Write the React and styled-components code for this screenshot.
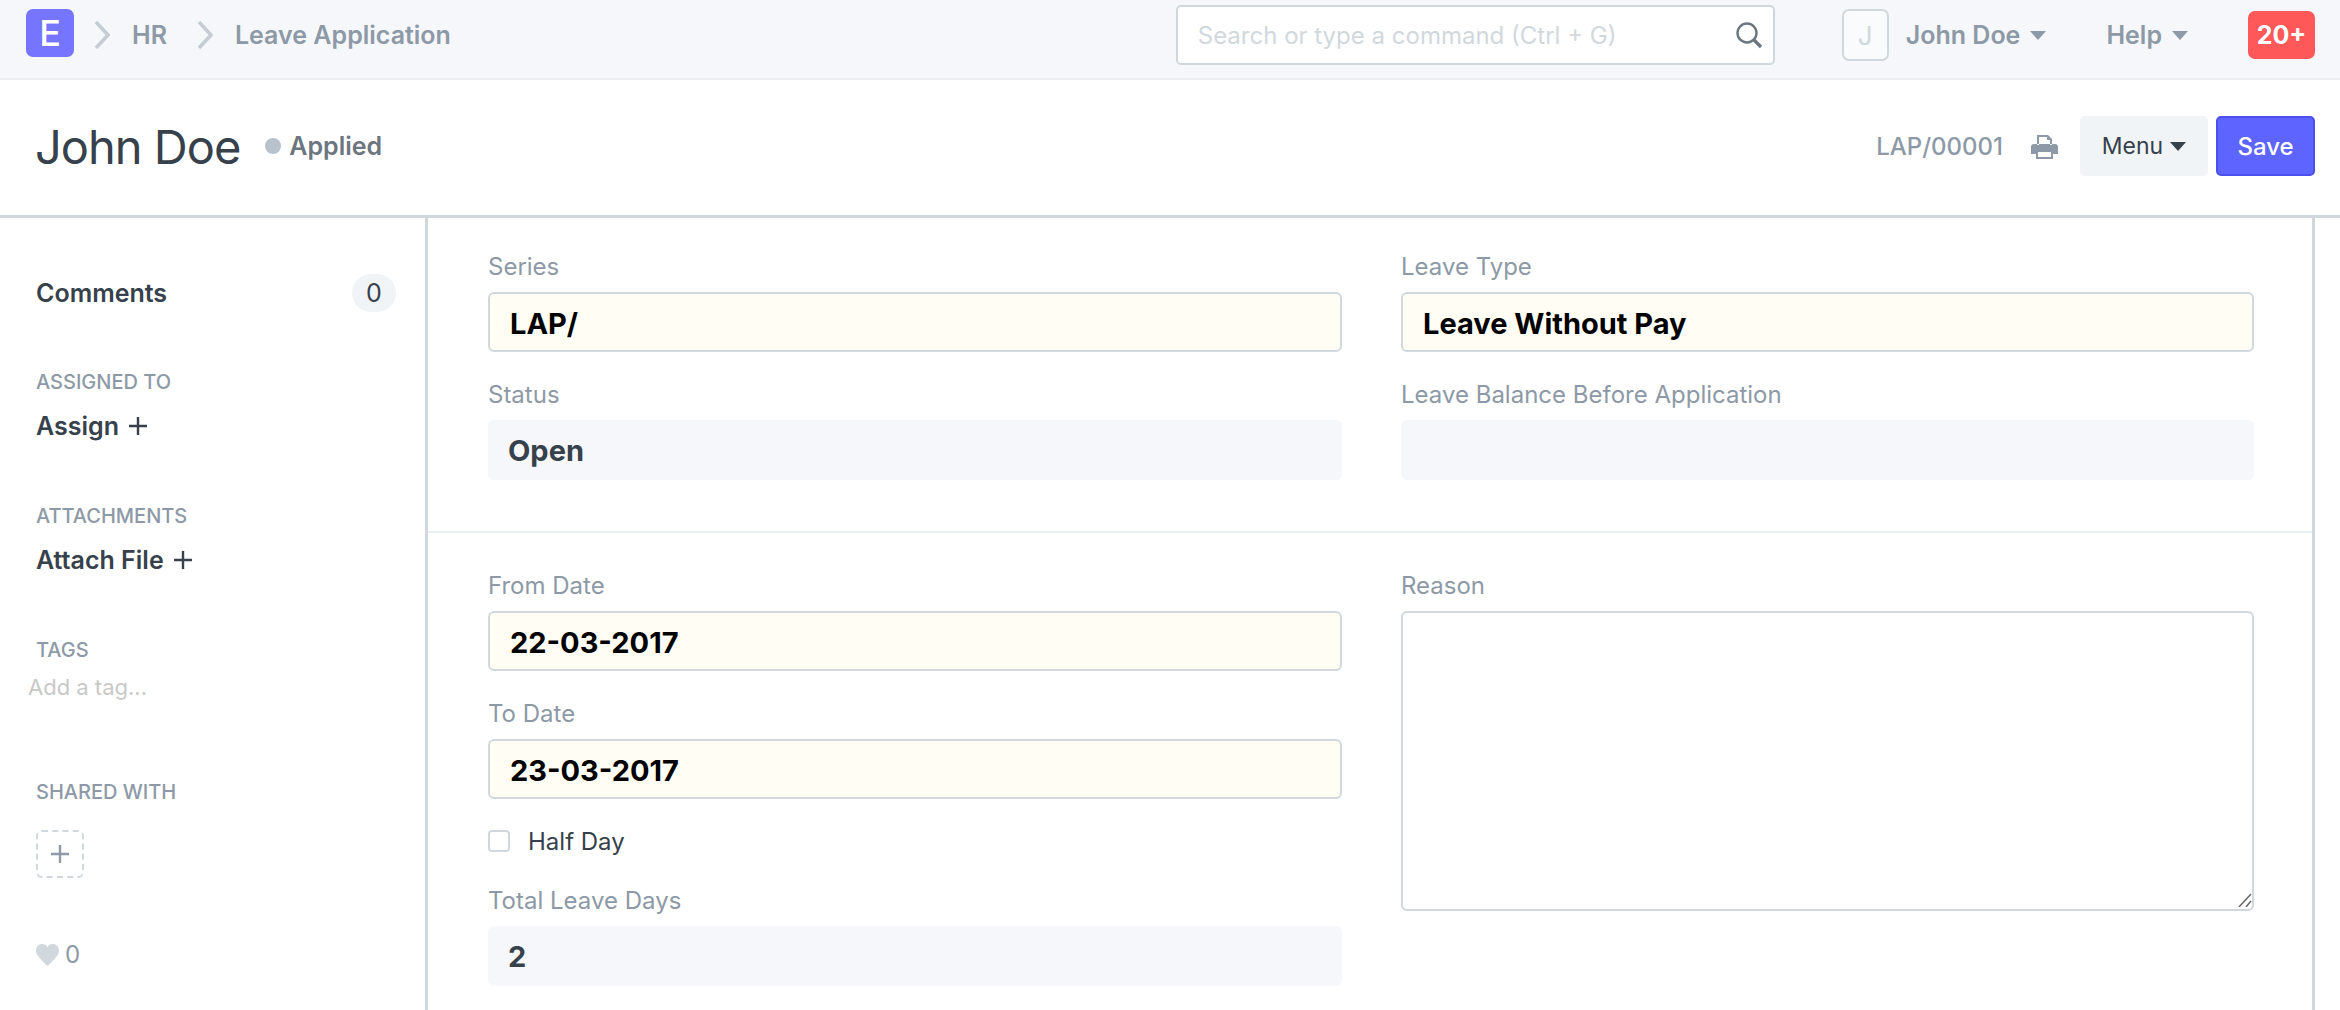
import React from 'react';
import styled, { createGlobalStyle } from 'styled-components';

const GlobalStyle = createGlobalStyle`
    html, body {
        margin: 0;
        padding: 0;
        background: #fff;
        font-family: Inter, "Liberation Sans", sans-serif;
        color: #36414c;
    }
    * { box-sizing: border-box; }
`;

const Page = styled.div`
    width: 2340px;
    height: 1010px;
    overflow: hidden;
    display: flex;
    flex-direction: column;
`;

const Navbar = styled.header`
    height: 80px;
    flex: none;
    background: #f5f7fa;
    border-bottom: 2px solid #ebeef2;
    display: flex;
    align-items: center;
    padding: 0 25px 8px 26px;
`;

const Logo = styled.div`
    width: 48px;
    height: 48px;
    margin-bottom: 4px;
    border-radius: 7px;
    background: #7575ff;
    color: #fff;
    font-size: 36px;
    font-weight: 500;
    display: flex;
    align-items: center;
    justify-content: center;
`;

const Crumb = styled.span`
    font-size: 25px;
    font-weight: 600;
    color: #8d99a6;
`;

const Chevron = styled.svg`
    width: 16px;
    height: 28px;
    margin: 0 22px 0 ${(p) => p.$left}px;
    fill: none;
    stroke: #c5cdd4;
    stroke-width: 3.5;
`;

const Spacer = styled.div`
    flex: 1;
`;

const SearchBox = styled.div`
    width: 599px;
    height: 60px;
    background: #fff;
    border: 2px solid #d1d8dd;
    border-radius: 5px;
    display: flex;
    align-items: center;
    justify-content: space-between;
    padding: 0 10px 0 20px;
    font-size: 24px;
    color: #d1d8dd;
`;

const Avatar = styled.div`
    width: 47px;
    height: 52px;
    margin-left: 67px;
    border: 2px solid #d1d8dd;
    border-radius: 7px;
    background: #fafbfc;
    color: #d1d8dd;
    font-size: 26px;
    display: flex;
    align-items: center;
    justify-content: center;
`;

const NavItem = styled.span`
    margin-left: ${(p) => p.$gap}px;
    font-size: 25px;
    font-weight: 600;
    color: #8d99a6;
    display: flex;
    align-items: center;
    gap: 10px;
`;

const Caret = styled.i`
    width: 0;
    height: 0;
    border-left: 8px solid transparent;
    border-right: 8px solid transparent;
    border-top: 9px solid ${(p) => p.$color || '#8d99a6'};
`;

const Badge = styled.div`
    width: 67px;
    height: 48px;
    margin-left: 60px;
    border-radius: 7px;
    background: #ff5858;
    color: #fff;
    font-size: 25px;
    font-weight: 700;
    display: flex;
    align-items: center;
    justify-content: center;
`;

const TitleBar = styled.div`
    height: 138px;
    flex: none;
    border-bottom: 3px solid #d1d8dd;
    display: flex;
    align-items: center;
    padding: 0 25px 3px 35px;
`;

const Title = styled.h1`
    margin: 0;
    font-size: 47px;
    font-weight: 400;
    letter-spacing: -1px;
    color: #36414c;
`;

const StatusDot = styled.i`
    width: 16px;
    height: 16px;
    margin: 0 8px 0 25px;
    border-radius: 50%;
    background: #b8c2cc;
`;

const StatusText = styled.span`
    font-size: 25px;
    font-weight: 600;
    color: #6c7680;
`;

const DocName = styled.span`
    font-size: 24px;
    font-weight: 500;
    color: #8d99a6;
`;

const PrintIcon = styled.svg`
    width: 27px;
    height: 25px;
    margin: 0 22px 0 28px;
    fill: #8d99a6;
`;

const MenuButton = styled.button`
    width: 128px;
    height: 60px;
    border: none;
    border-radius: 5px;
    background: #f0f4f7;
    color: #36414c;
    font: 400 23px Inter, sans-serif;
    display: flex;
    align-items: center;
    justify-content: center;
    gap: 7px;
`;

const SaveButton = styled.button`
    width: 99px;
    height: 60px;
    margin-left: 8px;
    border: 2px solid #4b4fef;
    border-radius: 5px;
    background: #5e64ff;
    color: #fff;
    font: 500 24px Inter, sans-serif;
`;

const Body = styled.div`
    flex: 1;
    display: flex;
`;

const Sidebar = styled.aside`
    width: 428px;
    flex: none;
    border-right: 3px solid #d1d8dd;
    padding: 56px 0 0 36px;
`;

const CommentRow = styled.div`
    display: flex;
    align-items: center;
    justify-content: space-between;
    width: 360px;
    height: 38px;
    font-size: 25px;
    font-weight: 600;
`;

const CountPill = styled.span`
    width: 44px;
    height: 38px;
    border-radius: 19px;
    background: #f0f4f7;
    font-weight: 400;
    display: flex;
    align-items: center;
    justify-content: center;
`;

const SideHeading = styled.div`
    margin-top: ${(p) => p.$top}px;
    font-size: 20px;
    font-weight: 500;
    line-height: 24px;
    color: #8d99a6;
`;

const SideAction = styled.div`
    margin-top: 17px;
    font-size: 25px;
    font-weight: 600;
    line-height: 30px;
    display: flex;
    align-items: center;
    gap: 9px;
`;

const TagInput = styled.div`
    margin: 11px 0 0 -8px;
    font-size: 22px;
    line-height: 28px;
    color: #c8c8c8;
`;

const ShareBox = styled.div`
    width: 48px;
    height: 48px;
    margin-top: 26px;
    border: 2px dashed #d1d8dd;
    border-radius: 6px;
    display: flex;
    align-items: center;
    justify-content: center;
`;

const Likes = styled.div`
    margin-top: 62px;
    font-size: 24px;
    color: #8d99a6;
    display: flex;
    align-items: center;
    gap: 6px;
`;

const Main = styled.main`
    width: 1887px;
    flex: none;
    border-right: 3px solid #d1d8dd;
`;

const Section = styled.section`
    display: grid;
    grid-template-columns: 854px 853px;
    column-gap: 59px;
    padding: ${(p) => p.$pad};
    border-bottom: ${(p) => (p.$divider ? '2px solid #ebeef2' : 'none')};
`;

const Column = styled.div`
    display: flex;
    flex-direction: column;
`;

const FieldLabel = styled.label`
    display: block;
    height: 28px;
    margin: ${(p) => p.$top || 0}px 0 11px;
    font-size: 24px;
    line-height: 28px;
    color: #8d99a6;
`;

const Input = styled.div`
    height: 60px;
    padding: 2px 20px 0;
    border: 2px solid #d1d8dd;
    border-radius: 6px;
    background: #fffdf4;
    color: #000;
    font-size: 29px;
    font-weight: 700;
    display: flex;
    align-items: center;
`;

const ReadOnly = styled.div`
    height: 60px;
    padding: 0 20px;
    border-radius: 6px;
    background: #f5f7fa;
    color: #36414c;
    font-size: 29px;
    font-weight: 700;
    display: flex;
    align-items: center;
`;

const CheckRow = styled.div`
    margin-top: 29px;
    height: 26px;
    display: flex;
    align-items: center;
    gap: 18px;
    font-size: 24px;
`;

const CheckBox = styled.i`
    width: 22px;
    height: 22px;
    border: 2px solid #d1d8dd;
    border-radius: 4px;
`;

const TextArea = styled.div`
    position: relative;
    height: 300px;
    border: 2px solid #d1d8dd;
    border-radius: 6px;
`;

const Grip = styled.svg`
    position: absolute;
    right: 0;
    bottom: 2px;
    width: 14px;
    height: 14px;
    stroke: #666;
    stroke-width: 1.5;
`;

const Plus = ({ size = 20, color = '#36414c' }) => (
    <svg width={size} height={size} viewBox="0 0 20 20" fill="none" stroke={color} strokeWidth="2.4">
        <path d="M10 1v18M1 10h18" />
    </svg>
);

const ChevronIcon = ({ left }) => (
    <Chevron $left={left} viewBox="0 0 16 28">
        <path d="M2 1l12 13L2 27" />
    </Chevron>
);

const App = () => {
    return (
        <Page>
            <GlobalStyle />
            <Navbar>
                <Logo>E</Logo>
                <ChevronIcon left={20} />
                <Crumb>HR</Crumb>
                <ChevronIcon left={30} />
                <Crumb>Leave Application</Crumb>
                <Spacer />
                <SearchBox>
                    Search or type a command (Ctrl + G)
                    <svg width="28" height="28" viewBox="0 0 28 28" fill="none" stroke="#6c7680" strokeWidth="2.4">
                        <circle cx="12" cy="12" r="9.5" />
                        <path d="M19 19l7 7" strokeWidth="3.4" />
                    </svg>
                </SearchBox>
                <Avatar>J</Avatar>
                <NavItem $gap={17}>John Doe<Caret /></NavItem>
                <NavItem $gap={60}>Help<Caret /></NavItem>
                <Badge>20+</Badge>
            </Navbar>
            <TitleBar>
                <Title>John Doe</Title>
                <StatusDot />
                <StatusText>Applied</StatusText>
                <Spacer />
                <DocName>LAP/00001</DocName>
                <PrintIcon viewBox="0 0 27 25">
                    <path d="M6 1h11l4 4v6h-2V6h-3V3H8v8H6zM3 10h21a3 3 0 0 1 3 3v7h-5v5H5v-5H0v-7a3 3 0 0 1 3-3zm4 8v5h13v-5z" fillRule="evenodd" />
                </PrintIcon>
                <MenuButton>Menu<Caret $color="#36414c" /></MenuButton>
                <SaveButton>Save</SaveButton>
            </TitleBar>
            <Body>
                <Sidebar>
                    <CommentRow>Comments<CountPill>0</CountPill></CommentRow>
                    <SideHeading $top={58}>ASSIGNED TO</SideHeading>
                    <SideAction>Assign <Plus /></SideAction>
                    <SideHeading $top={63}>ATTACHMENTS</SideHeading>
                    <SideAction>Attach File <Plus /></SideAction>
                    <SideHeading $top={63}>TAGS</SideHeading>
                    <TagInput>Add a tag...</TagInput>
                    <SideHeading $top={79}>SHARED WITH</SideHeading>
                    <ShareBox><Plus color="#8d99a6" /></ShareBox>
                    <Likes>
                        <svg width="23" height="22" viewBox="0 0 24 23" fill="#d1d8dd">
                            <path d="M12 23C5 16 0 12 0 6.500A6.300 6.300 0 0 1 6.500 0C9 0 11 1.300 12 3.300 13 1.300 15 0 17.500 0A6.300 6.300 0 0 1 24 6.500C24 12 19 16 12 23z" />
                        </svg>
                        0
                    </Likes>
                </Sidebar>
                <Main>
                    <Section $pad="35px 60px 51px" $divider>
                        <Column>
                            <FieldLabel>Series</FieldLabel>
                            <Input>LAP/</Input>
                            <FieldLabel $top={29}>Status</FieldLabel>
                            <ReadOnly>Open</ReadOnly>
                        </Column>
                        <Column>
                            <FieldLabel>Leave Type</FieldLabel>
                            <Input>Leave Without Pay</Input>
                            <FieldLabel $top={29}>Leave Balance Before Application</FieldLabel>
                            <ReadOnly />
                        </Column>
                    </Section>
                    <Section $pad="39px 60px 0">
                        <Column>
                            <FieldLabel>From Date</FieldLabel>
                            <Input>22-03-2017</Input>
                            <FieldLabel $top={29}>To Date</FieldLabel>
                            <Input>23-03-2017</Input>
                            <CheckRow><CheckBox />Half Day</CheckRow>
                            <FieldLabel $top={33}>Total Leave Days</FieldLabel>
                            <ReadOnly>2</ReadOnly>
                        </Column>
                        <Column>
                            <FieldLabel>Reason</FieldLabel>
                            <TextArea>
                                <Grip viewBox="0 0 14 14">
                                    <path d="M1 14L13 1M8 14l5-6" />
                                </Grip>
                            </TextArea>
                        </Column>
                    </Section>
                </Main>
            </Body>
        </Page>
    );
};

export default App;
